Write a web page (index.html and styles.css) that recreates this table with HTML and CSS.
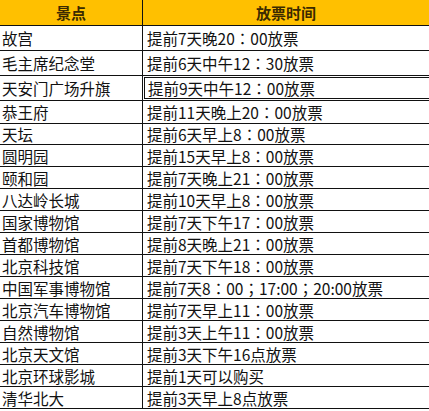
FILE: index.html
```html
<!DOCTYPE html>
<html lang="zh">
<head>
<meta charset="utf-8">
<link rel="stylesheet" href="styles.css">
</head>
<body>
<div class="sheet">
  <div class="row head"><div class="c1">景点</div><div class="c2">放票时间</div></div>
  <div class="row h25"><div class="c1">故宫</div><div class="c2">提前7天晚20<span class="p">：</span>00放票</div></div>
  <div class="row h25"><div class="c1">毛主席纪念堂</div><div class="c2">提前6天中午12<span class="p">：</span>30放票</div></div>
  <div class="row h25 sel"><div class="c1">天安门广场升旗</div><div class="c2"><span class="box">提前9天中午12<span class="p">：</span>00放票</span></div></div>
  <div class="row h23"><div class="c1">恭王府</div><div class="c2">提前11天晚上20<span class="p">：</span>00放票</div></div>
  <div class="row h21"><div class="c1">天坛</div><div class="c2">提前6天早上8<span class="p">：</span>00放票</div></div>
  <div class="row"><div class="c1">圆明园</div><div class="c2">提前15天早上8<span class="p">：</span>00放票</div></div>
  <div class="row"><div class="c1">颐和园</div><div class="c2">提前7天晚上21<span class="p">：</span>00放票</div></div>
  <div class="row"><div class="c1">八达岭长城</div><div class="c2">提前10天早上8<span class="p">：</span>00放票</div></div>
  <div class="row"><div class="c1">国家博物馆</div><div class="c2">提前7天下午17<span class="p">：</span>00放票</div></div>
  <div class="row"><div class="c1">首都博物馆</div><div class="c2">提前8天晚上21<span class="p">：</span>00放票</div></div>
  <div class="row"><div class="c1">北京科技馆</div><div class="c2">提前7天下午18<span class="p">：</span>00放票</div></div>
  <div class="row"><div class="c1">中国军事博物馆</div><div class="c2">提前7天8<span class="p">：</span>00<span class="p">；</span>17:00<span class="p">；</span>20:00放票</div></div>
  <div class="row"><div class="c1">北京汽车博物馆</div><div class="c2">提前7天早上11<span class="p">：</span>00放票</div></div>
  <div class="row"><div class="c1">自然博物馆</div><div class="c2">提前3天上午11<span class="p">：</span>00放票</div></div>
  <div class="row"><div class="c1">北京天文馆</div><div class="c2">提前3天下午16点放票</div></div>
  <div class="row"><div class="c1">北京环球影城</div><div class="c2">提前1天可以购买</div></div>
  <div class="row"><div class="c1">清华北大</div><div class="c2">提前3天早上8点放票</div></div>
</div>
</body>
</html>
```
FILE: styles.css
```css
html, body {
  margin: 0;
  padding: 0;
  background: #ffffff;
}
.sheet {
  width: 429px;
  font-family: "Noto Sans CJK SC", "Noto Sans", sans-serif;
  font-size: 15.5px;
  color: #111111;
}
.p {
  font-family: "Noto Sans CJK TC", "Noto Sans CJK SC", sans-serif;
}
.row {
  display: flex;
  box-sizing: border-box;
  height: 22px;
  border-bottom: 1px solid #111111;
}
.row.head {
  height: 26px;
  background: #ffc000;
  font-weight: bold;
  font-size: 15px;
  color: #3b2a00;
}
.row.h25 { height: 25px; }
.row.h23 { height: 23px; }
.row.h21 { height: 21px; }
.c1, .c2 {
  display: flex;
  align-items: center;
  white-space: nowrap;
  overflow: hidden;
}
.c1 {
  width: 143px;
  flex: none;
  box-sizing: border-box;
  padding-left: 2px;
  border-right: 1px solid #111111;
}
.c2 {
  flex: 1;
  padding-left: 4px;
}
.head .c1, .head .c2 {
  justify-content: center;
  padding-left: 0;
}
.sel .c2 {
  padding-left: 0;
  align-items: stretch;
}
.box {
  flex: 1;
  display: flex;
  align-items: center;
  padding-left: 3px;
  margin: 1px 0 1px 1px;
  border: 1px solid #111111;
  border-right: none;
}
```
